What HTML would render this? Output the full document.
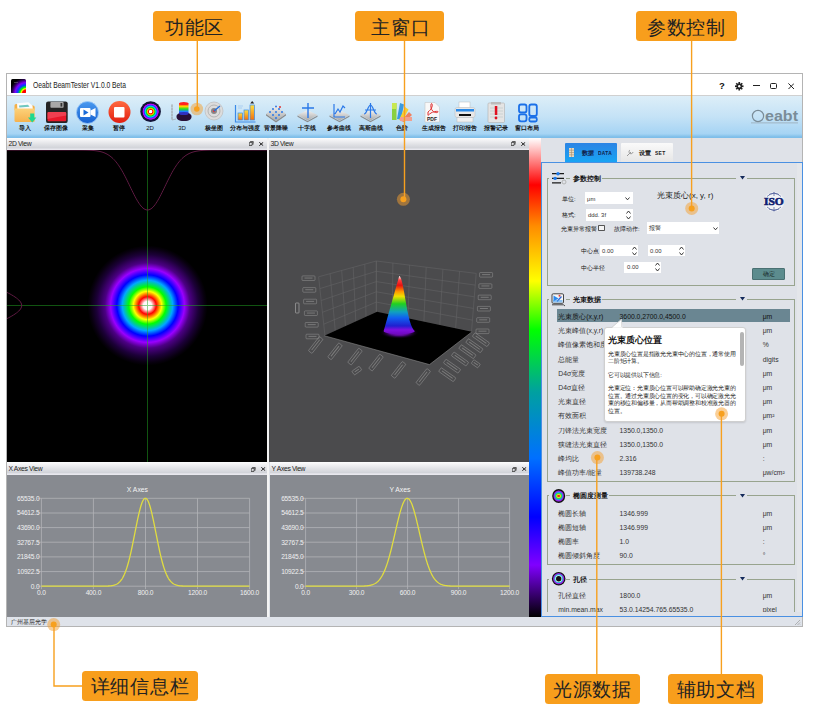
<!DOCTYPE html>
<html><head><meta charset="utf-8">
<style>
html,body{margin:0;padding:0;}
body{width:828px;height:727px;overflow:hidden;background:#fff;position:relative;font-family:"Liberation Sans",sans-serif;color:#222;}
.a{position:absolute;}
.win{left:6px;top:73px;width:797px;height:554px;border:1px solid #b4b4b4;box-sizing:border-box;background:#dfe2e8;}
.title{left:7px;top:74px;width:795px;height:21px;background:#fff;border-bottom:1px solid #d0d0d0;}
.tb{left:7px;top:96px;width:795px;height:42px;background:linear-gradient(#ddeef8,#c4e2f6 50%,#a6d4f4 90%,#82c0ea 97%,#7cbce8);}
.hdr{height:12px;background:linear-gradient(#fdfdfd 0%,#f2f2f4 20%,#dfe0e4 55%,#d0d2d8 85%,#e8e8ee 90%,#e8e8ee 100%);font-size:6.8px;line-height:12px;color:#222;}
.hdr span{position:absolute;left:1.5px;top:0;letter-spacing:-0.35px;}
.hdr i{position:absolute;font-style:normal;top:0;font-size:8px;}
.lbl{background:#f89e1c;border-radius:3.5px;color:#222;font-size:19px;text-align:center;line-height:33px;height:30px;box-sizing:border-box;overflow:hidden;letter-spacing:0.8px;}
.ol{background:#f59a1a;}
.t{white-space:nowrap;line-height:10px;}
.dot{width:13px;height:13px;border-radius:50%;background:rgba(245,160,40,0.45);}
.dot:after{content:"";position:absolute;left:3px;top:3px;width:7px;height:7px;border-radius:50%;background:#f7a01e;}
</style></head><body>

<!-- window -->
<div class="a win"></div>
<div class="a title"></div>
<div class="a tb"></div>


<!-- title bar content -->
<svg class="a" style="left:11px;top:78.5px;" width="15" height="14.5" viewBox="0 0 15 14.5">
<defs><radialGradient id="tg" cx="15" cy="14.5" r="16" gradientUnits="userSpaceOnUse"><stop offset="0" stop-color="#ff0000"/><stop offset="0.22" stop-color="#ff0000"/><stop offset="0.3" stop-color="#ffff00"/><stop offset="0.38" stop-color="#00ff00"/><stop offset="0.52" stop-color="#0040ff"/><stop offset="0.68" stop-color="#8000ff"/><stop offset="0.85" stop-color="#300060"/><stop offset="1" stop-color="#000000"/></radialGradient></defs>
<rect x="0" y="0" width="15" height="14.5" rx="1.5" fill="url(#tg)"/>
<path d="M3 3.5h4" stroke="#888" stroke-width="0.8" opacity="0.6"/>
</svg>
<div class="a" style="left:33px;top:80px;font-size:8.2px;line-height:12px;color:#222;white-space:nowrap;transform:scaleX(0.82);transform-origin:0 0;">Oeabt BeamTester V1.0.0 Beta</div>
<div class="a" style="left:719px;top:80px;font-size:9.5px;font-weight:bold;line-height:11px;color:#111;">?</div>
<svg class="a" style="left:735px;top:82px;" width="8.5" height="8.5" viewBox="0 0 10 10"><g fill="#222"><circle cx="5" cy="5" r="3.3"/><rect x="4" y="0" width="2" height="10"/><rect x="0" y="4" width="10" height="2"/><rect x="4" y="0" width="2" height="10" transform="rotate(45 5 5)"/><rect x="4" y="0" width="2" height="10" transform="rotate(-45 5 5)"/></g><circle cx="5" cy="5" r="1.4" fill="#fff"/></svg>
<div class="a" style="left:753px;top:85px;width:6.5px;height:1.3px;background:#222;"></div>
<div class="a" style="left:770px;top:82.5px;width:7px;height:6.5px;border:1.2px solid #222;border-radius:1.5px;box-sizing:border-box;"></div>
<svg class="a" style="left:787.5px;top:82.5px;" width="6.5" height="6.5" viewBox="0 0 6.5 6.5"><path d="M0.4 0.4L6.1 6.1M6.1 0.4L0.4 6.1" stroke="#222" stroke-width="1"/></svg>
<!-- toolbar icons -->
<svg class="a" style="left:7px;top:95px;" width="794" height="43" viewBox="7 95 794 43">
<defs>
<linearGradient id="fold" x1="0" y1="0" x2="0" y2="1"><stop offset="0" stop-color="#fcd27a"/><stop offset="1" stop-color="#f6b24e"/></linearGradient>
<linearGradient id="redc" x1="0" y1="0" x2="0" y2="1"><stop offset="0" stop-color="#ff6a40"/><stop offset="1" stop-color="#e21e10"/></linearGradient>
<linearGradient id="bluec" x1="0" y1="0" x2="0" y2="1"><stop offset="0" stop-color="#4a9af0"/><stop offset="1" stop-color="#1560d0"/></linearGradient>
<linearGradient id="rainbow" x1="0" y1="0" x2="0" y2="1"><stop offset="0" stop-color="#ff2020"/><stop offset="0.3" stop-color="#ffd000"/><stop offset="0.55" stop-color="#20e020"/><stop offset="0.8" stop-color="#2080ff"/><stop offset="1" stop-color="#3030c0"/></linearGradient>
<linearGradient id="plate" x1="0" y1="0" x2="0" y2="1"><stop offset="0" stop-color="#f4f4f4"/><stop offset="1" stop-color="#a8a8a8"/></linearGradient>
<linearGradient id="bar" x1="0" y1="0" x2="0" y2="1"><stop offset="0" stop-color="#ffe040"/><stop offset="1" stop-color="#f07010"/></linearGradient>
<radialGradient id="r2d"><stop offset="0" stop-color="#fff"/><stop offset="0.13" stop-color="#fff"/><stop offset="0.2" stop-color="#ff0000"/><stop offset="0.32" stop-color="#ffc000"/><stop offset="0.42" stop-color="#00e000"/><stop offset="0.52" stop-color="#00d0ff"/><stop offset="0.62" stop-color="#2040ff"/><stop offset="0.7" stop-color="#c000ff"/><stop offset="0.76" stop-color="#b000f0"/><stop offset="0.8" stop-color="#141440"/><stop offset="1" stop-color="#101030"/></radialGradient>
</defs>
<!-- 1 folder -->
<path d="M14.5 105.5q0-1.5 1.5-1.5h5l2 1.5h10q1.7 0 1.7 1.7v3h-20.2z" fill="#f4b048"/>
<path d="M17 103.2l11.5-1 4 3.5 0.6 5-15.5 1z" fill="#fbfbfb"/>
<path d="M19 105.5l9-0.7 1.5 2-10.2 0.8z" fill="#70c8c0"/>
<path d="M14.5 108.5h20.2v12q0 1.5-1.5 1.5h-17.2q-1.5 0-1.5-1.5z" fill="url(#fold)"/>
<path d="M30.2 113.4v4h-2.2l4.2 5.2 4.2-5.2h-2.2v-4z" fill="#1ed890"/>
<!-- 2 floppy -->
<rect x="46" y="101.4" width="21.7" height="21.7" rx="2.2" fill="#242424"/>
<rect x="50.4" y="102" width="13.2" height="5.8" rx="0.8" fill="#a8a8a8"/>
<rect x="60.5" y="103" width="1.8" height="3.6" fill="#333"/>
<rect x="47.5" y="111.9" width="18.7" height="9.3" rx="1.2" fill="#e8182a"/>
<path d="M47.5 113.1q0-1.2 1.2-1.2h16.3q1.2 0 1.2 1.2v2.5q-8 1-18.7 3.5z" fill="#f04a5a" opacity="0.8"/>
<!-- 3 capture -->
<circle cx="87.5" cy="112.5" r="11" fill="url(#bluec)"/>
<circle cx="87.5" cy="112.5" r="11" fill="none" stroke="#9cc8f8" stroke-width="0.8"/>
<rect x="80" y="108" width="10.5" height="9" rx="1" fill="#fff"/>
<path d="M90.5 110.5l5-2.5v9l-5-2.5z" fill="#fff"/>
<path d="M83.5 109.5v6l5-3z" fill="#1a6ad8"/>
<!-- 4 pause -->
<circle cx="119.5" cy="112" r="11" fill="url(#redc)"/>
<rect x="114" y="107" width="10.5" height="10.5" rx="1" fill="#fff"/>
<!-- 5 2D -->
<circle cx="150.6" cy="111.6" r="10.3" fill="url(#r2d)"/>
<!-- 6 3D -->
<g stroke="#999" stroke-width="0.6" fill="none"><path d="M172 104v16M171 106h2M171 109h2M171 112h2M171 115h2M171 118h2M172 120l4 -1"/></g>
<path d="M176.5 116.5c0-2.5 3-4 7.5-4s7.5 1.5 7.5 4-1.5 4.5-7.5 4.5-7.5-2-7.5-4.5z" fill="#281038"/>
<rect x="179" y="103.5" width="9.5" height="10" fill="url(#rainbow)"/>
<ellipse cx="183.75" cy="113.5" rx="4.75" ry="1.5" fill="#3030c0"/>
<ellipse cx="183.75" cy="103.5" rx="4.75" ry="1.6" fill="#ff2020"/>
<!-- 7 polar -->
<circle cx="214" cy="111" r="9" fill="#dcdcdc" stroke="#c0c0c0" stroke-width="0.8"/>
<circle cx="214" cy="111" r="6" fill="none" stroke="#aaa" stroke-width="0.8"/>
<circle cx="214" cy="111" r="3" fill="#888"/>
<circle cx="214" cy="111" r="1.2" fill="#e04040"/>
<path d="M214 111l6-5" stroke="#2070e0" stroke-width="1.3"/>
<!-- 8 distribution -->
<path d="M235.5 105v17h20" fill="none" stroke="#3a8ae8" stroke-width="1.2"/>
<rect x="238" y="113" width="4.5" height="7" fill="url(#bar)" stroke="#3a8ae8" stroke-width="0.7"/>
<rect x="244" y="110" width="4.5" height="10" fill="url(#bar)" stroke="#3a8ae8" stroke-width="0.7"/>
<rect x="250" y="105" width="4.5" height="15" fill="url(#bar)" stroke="#3a8ae8" stroke-width="0.7"/>
<path d="M252.2 101l-2 2.5h4z" fill="#222"/>
<g stroke="#9bc4ee" stroke-width="0.7"><path d="M238 106h5M238 108h4"/></g>
<!-- 9 bg denoise -->
<path d="M276 105l10 9-10 7-10-7z" fill="url(#plate)"/>
<path d="M266 114l10 7 10-7v1.5l-10 7-10-7z" fill="#8a8a8a"/>
<g fill="#2a78e8"><circle cx="276" cy="106.5" r="1"/><circle cx="273" cy="109" r="1"/><circle cx="279" cy="109" r="1"/><circle cx="270" cy="112" r="1"/><circle cx="276" cy="112" r="1"/><circle cx="282" cy="112" r="1"/><circle cx="273" cy="115" r="1"/><circle cx="279" cy="115" r="1"/><circle cx="276" cy="118" r="1"/></g>
<circle cx="280" cy="107" r="1" fill="#e03030"/>
<!-- 10 crosshair -->
<path d="M307.5 110l10 5-10 5.5-10-5.5z" fill="url(#plate)"/>
<path d="M297.5 115.5l10 5.5 10-5.5v1.3l-10 5.5-10-5.5z" fill="#8a8a8a"/>
<path d="M308 103v15M302 108h12" stroke="#2a78e8" stroke-width="1.4"/>
<!-- 11 reference curve -->
<path d="M339.5 110l10 5-10 5.5-10-5.5z" fill="url(#plate)"/>
<path d="M329.5 115.5l10 5.5 10-5.5v1.3l-10 5.5-10-5.5z" fill="#8a8a8a"/>
<path d="M334 104v13h11M335 114l3-5 2 3 3-6 2 2" fill="none" stroke="#2a78e8" stroke-width="1.2"/>
<!-- 12 gaussian -->
<path d="M370.5 110l10 5-10 5.5-10-5.5z" fill="url(#plate)"/>
<path d="M360.5 115.5l10 5.5 10-5.5v1.3l-10 5.5-10-5.5z" fill="#8a8a8a"/>
<path d="M364 114c3 0 4-9 6.5-9s3.5 9 6.5 9M370.5 103v15M365 110h11" fill="none" stroke="#2a78e8" stroke-width="1.2"/>
<!-- 13 color scale -->
<rect x="392" y="103" width="4.5" height="17" fill="#8ad040"/>
<rect x="392" y="103" width="4.5" height="6" fill="#c8e850"/>
<path d="M397 119l3-16 4 1.5-3 15z" fill="#3a9ae0"/>
<path d="M399 120l6-13 3.5 2.5-6 11z" fill="#f8d030"/>
<path d="M401 121l8-9 3 3-8 7z" fill="#f08060"/>
<rect x="400" y="117" width="12" height="4" fill="#f0a090"/>
<!-- 14 pdf -->
<path d="M425 102.5h10l4.5 4.5v15h-14.5z" fill="#f8f8f8" stroke="#c8c8c8" stroke-width="0.6"/>
<path d="M428 112c3-2 5-6 4-8s-2 3 0 6 5 3 6 2-4-1-7 1-3 3-3 2z" fill="none" stroke="#e03030" stroke-width="1"/>
<text x="427" y="121" font-size="5" font-weight="bold" fill="#222" font-family="Liberation Sans">PDF</text>
<!-- 15 printer -->
<rect x="459" y="102" width="11" height="6" fill="#fff" stroke="#bbb" stroke-width="0.5"/>
<rect x="455" y="107.5" width="20" height="10" rx="2" fill="#e8e8e8" stroke="#bbb" stroke-width="0.5"/>
<rect x="456" y="109" width="18" height="2.5" fill="#2a8ae8"/>
<rect x="459" y="114" width="12" height="2" fill="#111"/>
<rect x="457" y="117.5" width="16" height="4.5" fill="#f0f0f0" stroke="#bbb" stroke-width="0.5"/>
<!-- 16 alarm record -->
<rect x="488" y="103" width="16.5" height="19.5" rx="1" fill="#e4e4e4" stroke="#b0b0b0" stroke-width="0.6"/>
<rect x="491" y="102" width="10" height="2.5" fill="#bbb"/>
<g stroke="#b8c8c8" stroke-width="0.6"><path d="M490 108h13M490 111h13M490 114h13M490 117h13"/></g>
<rect x="494.8" y="106" width="2.5" height="9" fill="#e01020"/>
<circle cx="496" cy="118" r="1.4" fill="#e01020"/>
<!-- 17 layout -->
<g fill="none" stroke="#1a70e8" stroke-width="1.8">
<rect x="519" y="104.5" width="7.5" height="8" rx="2"/>
<rect x="519" y="114.3" width="7.5" height="7" rx="2"/>
<rect x="529.3" y="104.5" width="7.5" height="11.5" rx="2"/>
<rect x="529.3" y="117.5" width="7.5" height="4" rx="1.5"/>
</g>
<!-- logo -->
<circle cx="758" cy="116" r="5.6" fill="none" stroke="#7a8c98" stroke-width="1.2"/>
<text x="765" y="120.5" font-size="14" font-weight="bold" fill="#7a8c98" font-family="Liberation Sans" textLength="33" lengthAdjust="spacingAndGlyphs">eabt</text>
<rect x="751" y="122.5" width="47" height="0.8" fill="#98aab6"/>
</svg>
<div class="a" style="left:7px;top:124px;width:794px;height:9px;font-size:6px;line-height:9px;color:#111;font-weight:bold;">
<span class="a" style="left:-2px;width:40px;text-align:center;">导入</span>
<span class="a" style="left:29px;width:40px;text-align:center;">保存图像</span>
<span class="a" style="left:61px;width:40px;text-align:center;">采集</span>
<span class="a" style="left:92px;width:40px;text-align:center;">暂停</span>
<span class="a" style="left:123px;width:40px;text-align:center;font-weight:normal;">2D</span>
<span class="a" style="left:155px;width:40px;text-align:center;font-weight:normal;">3D</span>
<span class="a" style="left:187px;width:40px;text-align:center;">极坐图</span>
<span class="a" style="left:218px;width:40px;text-align:center;">分布与强度</span>
<span class="a" style="left:249px;width:40px;text-align:center;">背景降噪</span>
<span class="a" style="left:280px;width:40px;text-align:center;">十字线</span>
<span class="a" style="left:312px;width:40px;text-align:center;">参考曲线</span>
<span class="a" style="left:344px;width:40px;text-align:center;">高斯曲线</span>
<span class="a" style="left:375px;width:40px;text-align:center;">色阶</span>
<span class="a" style="left:407px;width:40px;text-align:center;">生成报告</span>
<span class="a" style="left:438px;width:40px;text-align:center;">打印报告</span>
<span class="a" style="left:469px;width:40px;text-align:center;">报警记录</span>
<span class="a" style="left:500px;width:40px;text-align:center;">窗口布局</span>
</div>

<!-- docks -->
<div class="a hdr" style="left:7px;top:138px;width:260px;"><span>2D View</span></div>
<svg class="a" style="left:7px;top:150px;" width="260" height="312" viewBox="7 150 260 312">
<defs><radialGradient id="beam" cx="147.5" cy="305.5" r="60" gradientUnits="userSpaceOnUse">
<stop offset="0" stop-color="#ffffff"/><stop offset="0.07" stop-color="#fff6f6"/><stop offset="0.145" stop-color="#ff0000"/><stop offset="0.19" stop-color="#ff8000"/><stop offset="0.235" stop-color="#ffff00"/><stop offset="0.31" stop-color="#00ff00"/><stop offset="0.42" stop-color="#00a8ff"/><stop offset="0.51" stop-color="#0000ff"/><stop offset="0.615" stop-color="#9a00ff"/><stop offset="0.71" stop-color="#4c0084"/><stop offset="0.85" stop-color="#1c0038"/><stop offset="0.95" stop-color="#08000f"/><stop offset="1" stop-color="#000000"/></radialGradient></defs>
<rect x="7" y="150" width="260" height="312" fill="#000"/>
<circle cx="147.5" cy="305.5" r="60" fill="url(#beam)"/>
<path d="M147.5 150V462M7 305.5H267" stroke="#22a822" stroke-width="1" opacity="0.5"/>
<path d="M7.0,150.00 L8.0,150.00 L9.0,150.00 L10.0,150.00 L11.0,150.00 L12.0,150.00 L13.0,150.00 L14.0,150.00 L15.0,150.00 L16.0,150.00 L17.0,150.00 L18.0,150.00 L19.0,150.00 L20.0,150.00 L21.0,150.00 L22.0,150.00 L23.0,150.00 L24.0,150.00 L25.0,150.00 L26.0,150.00 L27.0,150.00 L28.0,150.00 L29.0,150.00 L30.0,150.00 L31.0,150.00 L32.0,150.00 L33.0,150.00 L34.0,150.00 L35.0,150.00 L36.0,150.00 L37.0,150.00 L38.0,150.00 L39.0,150.00 L40.0,150.00 L41.0,150.00 L42.0,150.00 L43.0,150.00 L44.0,150.00 L45.0,150.00 L46.0,150.00 L47.0,150.00 L48.0,150.00 L49.0,150.00 L50.0,150.00 L51.0,150.00 L52.0,150.00 L53.0,150.00 L54.0,150.00 L55.0,150.00 L56.0,150.00 L57.0,150.00 L58.0,150.00 L59.0,150.00 L60.0,150.00 L61.0,150.00 L62.0,150.00 L63.0,150.00 L64.0,150.00 L65.0,150.00 L66.0,150.00 L67.0,150.00 L68.0,150.00 L69.0,150.00 L70.0,150.00 L71.0,150.00 L72.0,150.01 L73.0,150.01 L74.0,150.01 L75.0,150.01 L76.0,150.01 L77.0,150.02 L78.0,150.02 L79.0,150.03 L80.0,150.04 L81.0,150.04 L82.0,150.05 L83.0,150.07 L84.0,150.08 L85.0,150.10 L86.0,150.12 L87.0,150.15 L88.0,150.19 L89.0,150.22 L90.0,150.27 L91.0,150.33 L92.0,150.39 L93.0,150.47 L94.0,150.56 L95.0,150.67 L96.0,150.79 L97.0,150.93 L98.0,151.10 L99.0,151.29 L100.0,151.51 L101.0,151.76 L102.0,152.04 L103.0,152.37 L104.0,152.73 L105.0,153.14 L106.0,153.61 L107.0,154.12 L108.0,154.70 L109.0,155.34 L110.0,156.04 L111.0,156.82 L112.0,157.67 L113.0,158.59 L114.0,159.60 L115.0,160.70 L116.0,161.87 L117.0,163.14 L118.0,164.49 L119.0,165.93 L120.0,167.46 L121.0,169.06 L122.0,170.75 L123.0,172.52 L124.0,174.35 L125.0,176.25 L126.0,178.21 L127.0,180.21 L128.0,182.25 L129.0,184.31 L130.0,186.39 L131.0,188.47 L132.0,190.53 L133.0,192.57 L134.0,194.56 L135.0,196.49 L136.0,198.35 L137.0,200.12 L138.0,201.78 L139.0,203.32 L140.0,204.74 L141.0,206.00 L142.0,207.11 L143.0,208.05 L144.0,208.81 L145.0,209.39 L146.0,209.78 L147.0,209.98 L148.0,209.98 L149.0,209.78 L150.0,209.39 L151.0,208.81 L152.0,208.05 L153.0,207.11 L154.0,206.00 L155.0,204.74 L156.0,203.32 L157.0,201.78 L158.0,200.12 L159.0,198.35 L160.0,196.49 L161.0,194.56 L162.0,192.57 L163.0,190.53 L164.0,188.47 L165.0,186.39 L166.0,184.31 L167.0,182.25 L168.0,180.21 L169.0,178.21 L170.0,176.25 L171.0,174.35 L172.0,172.52 L173.0,170.75 L174.0,169.06 L175.0,167.46 L176.0,165.93 L177.0,164.49 L178.0,163.14 L179.0,161.87 L180.0,160.70 L181.0,159.60 L182.0,158.59 L183.0,157.67 L184.0,156.82 L185.0,156.04 L186.0,155.34 L187.0,154.70 L188.0,154.12 L189.0,153.61 L190.0,153.14 L191.0,152.73 L192.0,152.37 L193.0,152.04 L194.0,151.76 L195.0,151.51 L196.0,151.29 L197.0,151.10 L198.0,150.93 L199.0,150.79 L200.0,150.67 L201.0,150.56 L202.0,150.47 L203.0,150.39 L204.0,150.33 L205.0,150.27 L206.0,150.22 L207.0,150.19 L208.0,150.15 L209.0,150.12 L210.0,150.10 L211.0,150.08 L212.0,150.07 L213.0,150.05 L214.0,150.04 L215.0,150.04 L216.0,150.03 L217.0,150.02 L218.0,150.02 L219.0,150.01 L220.0,150.01 L221.0,150.01 L222.0,150.01 L223.0,150.01 L224.0,150.00 L225.0,150.00 L226.0,150.00 L227.0,150.00 L228.0,150.00 L229.0,150.00 L230.0,150.00 L231.0,150.00 L232.0,150.00 L233.0,150.00 L234.0,150.00 L235.0,150.00 L236.0,150.00 L237.0,150.00 L238.0,150.00 L239.0,150.00 L240.0,150.00 L241.0,150.00 L242.0,150.00 L243.0,150.00 L244.0,150.00 L245.0,150.00 L246.0,150.00 L247.0,150.00 L248.0,150.00 L249.0,150.00 L250.0,150.00 L251.0,150.00 L252.0,150.00 L253.0,150.00 L254.0,150.00 L255.0,150.00 L256.0,150.00 L257.0,150.00 L258.0,150.00 L259.0,150.00 L260.0,150.00 L261.0,150.00 L262.0,150.00 L263.0,150.00 L264.0,150.00 L265.0,150.00 L266.0,150.00 L267.0,150.00" fill="none" stroke="#5e1a42" stroke-width="1"/>
<path d="M-38.30,150.0 L-38.30,151.0 L-38.30,152.0 L-38.30,153.0 L-38.30,154.0 L-38.30,155.0 L-38.30,156.0 L-38.30,157.0 L-38.30,158.0 L-38.30,159.0 L-38.30,160.0 L-38.30,161.0 L-38.30,162.0 L-38.30,163.0 L-38.30,164.0 L-38.30,165.0 L-38.30,166.0 L-38.30,167.0 L-38.30,168.0 L-38.30,169.0 L-38.30,170.0 L-38.30,171.0 L-38.30,172.0 L-38.30,173.0 L-38.30,174.0 L-38.30,175.0 L-38.30,176.0 L-38.30,177.0 L-38.30,178.0 L-38.30,179.0 L-38.30,180.0 L-38.30,181.0 L-38.30,182.0 L-38.30,183.0 L-38.30,184.0 L-38.30,185.0 L-38.30,186.0 L-38.30,187.0 L-38.30,188.0 L-38.30,189.0 L-38.30,190.0 L-38.30,191.0 L-38.30,192.0 L-38.30,193.0 L-38.30,194.0 L-38.30,195.0 L-38.30,196.0 L-38.30,197.0 L-38.30,198.0 L-38.30,199.0 L-38.30,200.0 L-38.30,201.0 L-38.30,202.0 L-38.30,203.0 L-38.30,204.0 L-38.30,205.0 L-38.30,206.0 L-38.30,207.0 L-38.30,208.0 L-38.30,209.0 L-38.30,210.0 L-38.30,211.0 L-38.30,212.0 L-38.30,213.0 L-38.30,214.0 L-38.30,215.0 L-38.30,216.0 L-38.30,217.0 L-38.30,218.0 L-38.30,219.0 L-38.30,220.0 L-38.30,221.0 L-38.30,222.0 L-38.30,223.0 L-38.30,224.0 L-38.30,225.0 L-38.30,226.0 L-38.30,227.0 L-38.30,228.0 L-38.30,229.0 L-38.29,230.0 L-38.29,231.0 L-38.29,232.0 L-38.29,233.0 L-38.29,234.0 L-38.28,235.0 L-38.28,236.0 L-38.27,237.0 L-38.26,238.0 L-38.26,239.0 L-38.25,240.0 L-38.23,241.0 L-38.22,242.0 L-38.20,243.0 L-38.18,244.0 L-38.15,245.0 L-38.11,246.0 L-38.08,247.0 L-38.03,248.0 L-37.97,249.0 L-37.91,250.0 L-37.83,251.0 L-37.74,252.0 L-37.63,253.0 L-37.51,254.0 L-37.37,255.0 L-37.20,256.0 L-37.01,257.0 L-36.79,258.0 L-36.54,259.0 L-36.26,260.0 L-35.93,261.0 L-35.57,262.0 L-35.16,263.0 L-34.69,264.0 L-34.18,265.0 L-33.60,266.0 L-32.96,267.0 L-32.26,268.0 L-31.48,269.0 L-30.63,270.0 L-29.71,271.0 L-28.70,272.0 L-27.60,273.0 L-26.43,274.0 L-25.16,275.0 L-23.81,276.0 L-22.37,277.0 L-20.84,278.0 L-19.24,279.0 L-17.55,280.0 L-15.78,281.0 L-13.95,282.0 L-12.05,283.0 L-10.09,284.0 L-8.09,285.0 L-6.05,286.0 L-3.99,287.0 L-1.91,288.0 L0.17,289.0 L2.23,290.0 L4.27,291.0 L6.26,292.0 L8.19,293.0 L10.05,294.0 L11.82,295.0 L13.48,296.0 L15.02,297.0 L16.44,298.0 L17.70,299.0 L18.81,300.0 L19.75,301.0 L20.51,302.0 L21.09,303.0 L21.48,304.0 L21.68,305.0 L21.68,306.0 L21.48,307.0 L21.09,308.0 L20.51,309.0 L19.75,310.0 L18.81,311.0 L17.70,312.0 L16.44,313.0 L15.02,314.0 L13.48,315.0 L11.82,316.0 L10.05,317.0 L8.19,318.0 L6.26,319.0 L4.27,320.0 L2.23,321.0 L0.17,322.0 L-1.91,323.0 L-3.99,324.0 L-6.05,325.0 L-8.09,326.0 L-10.09,327.0 L-12.05,328.0 L-13.95,329.0 L-15.78,330.0 L-17.55,331.0 L-19.24,332.0 L-20.84,333.0 L-22.37,334.0 L-23.81,335.0 L-25.16,336.0 L-26.43,337.0 L-27.60,338.0 L-28.70,339.0 L-29.71,340.0 L-30.63,341.0 L-31.48,342.0 L-32.26,343.0 L-32.96,344.0 L-33.60,345.0 L-34.18,346.0 L-34.69,347.0 L-35.16,348.0 L-35.57,349.0 L-35.93,350.0 L-36.26,351.0 L-36.54,352.0 L-36.79,353.0 L-37.01,354.0 L-37.20,355.0 L-37.37,356.0 L-37.51,357.0 L-37.63,358.0 L-37.74,359.0 L-37.83,360.0 L-37.91,361.0 L-37.97,362.0 L-38.03,363.0 L-38.08,364.0 L-38.11,365.0 L-38.15,366.0 L-38.18,367.0 L-38.20,368.0 L-38.22,369.0 L-38.23,370.0 L-38.25,371.0 L-38.26,372.0 L-38.26,373.0 L-38.27,374.0 L-38.28,375.0 L-38.28,376.0 L-38.29,377.0 L-38.29,378.0 L-38.29,379.0 L-38.29,380.0 L-38.29,381.0 L-38.30,382.0 L-38.30,383.0 L-38.30,384.0 L-38.30,385.0 L-38.30,386.0 L-38.30,387.0 L-38.30,388.0 L-38.30,389.0 L-38.30,390.0 L-38.30,391.0 L-38.30,392.0 L-38.30,393.0 L-38.30,394.0 L-38.30,395.0 L-38.30,396.0 L-38.30,397.0 L-38.30,398.0 L-38.30,399.0 L-38.30,400.0 L-38.30,401.0 L-38.30,402.0 L-38.30,403.0 L-38.30,404.0 L-38.30,405.0 L-38.30,406.0 L-38.30,407.0 L-38.30,408.0 L-38.30,409.0 L-38.30,410.0 L-38.30,411.0 L-38.30,412.0 L-38.30,413.0 L-38.30,414.0 L-38.30,415.0 L-38.30,416.0 L-38.30,417.0 L-38.30,418.0 L-38.30,419.0 L-38.30,420.0 L-38.30,421.0 L-38.30,422.0 L-38.30,423.0 L-38.30,424.0 L-38.30,425.0 L-38.30,426.0 L-38.30,427.0 L-38.30,428.0 L-38.30,429.0 L-38.30,430.0 L-38.30,431.0 L-38.30,432.0 L-38.30,433.0 L-38.30,434.0 L-38.30,435.0 L-38.30,436.0 L-38.30,437.0 L-38.30,438.0 L-38.30,439.0 L-38.30,440.0 L-38.30,441.0 L-38.30,442.0 L-38.30,443.0 L-38.30,444.0 L-38.30,445.0 L-38.30,446.0 L-38.30,447.0 L-38.30,448.0 L-38.30,449.0 L-38.30,450.0 L-38.30,451.0 L-38.30,452.0 L-38.30,453.0 L-38.30,454.0 L-38.30,455.0 L-38.30,456.0 L-38.30,457.0 L-38.30,458.0 L-38.30,459.0 L-38.30,460.0 L-38.30,461.0" fill="none" stroke="#5e1a42" stroke-width="1"/>
</svg>
<div class="a" style="left:267px;top:138px;width:2px;height:479px;background:#f4f4f4;"></div>
<div class="a hdr" style="left:269px;top:138px;width:260px;"><span>3D View</span></div>
<svg class="a" style="left:269px;top:150px;" width="260" height="312" viewBox="269 150 260 312">
<defs>
<linearGradient id="pk" x1="0" y1="276" x2="0" y2="334" gradientUnits="userSpaceOnUse">
<stop offset="0" stop-color="#ffffff"/><stop offset="0.07" stop-color="#ff4040"/><stop offset="0.16" stop-color="#e81010"/><stop offset="0.27" stop-color="#ff9a00"/><stop offset="0.35" stop-color="#f0e000"/><stop offset="0.48" stop-color="#20d020"/><stop offset="0.62" stop-color="#10a0c0"/><stop offset="0.72" stop-color="#1060f0"/><stop offset="0.86" stop-color="#2020d0"/><stop offset="0.93" stop-color="#8010e0"/><stop offset="1" stop-color="#7008c0"/></linearGradient>
<radialGradient id="glow" cx="0.5" cy="0.5" r="0.5"><stop offset="0" stop-color="#9a18f0"/><stop offset="0.5" stop-color="#6a08b0" stop-opacity="0.8"/><stop offset="1" stop-color="#000" stop-opacity="0"/></radialGradient>
</defs>
<rect x="269" y="150" width="260" height="312" fill="#4b4b4d"/>
<path d="M318.6 276.8L376.3 261.0M376.3 261.0L476.2 273.4M319.9 288.6L376.3 271.3M376.3 271.3L475.3 285.1M321.2 300.5L376.3 281.6M376.3 281.6L474.3 296.8M322.4 312.3L376.3 291.8M376.3 291.8L473.4 308.4M323.7 324.2L376.3 302.1M376.3 302.1L472.4 320.1M325.0 336.0L376.3 312.4M376.3 312.4L471.5 331.8M318.6 276.8L325.0 336.0M330.1 273.6L335.3 331.3M341.7 270.5L345.5 326.6M353.2 267.3L355.8 321.8M364.8 264.2L366.0 317.1M376.3 261.0L376.3 312.4M376.3 261.0L376.3 312.4M392.9 263.1L392.2 315.6M409.6 265.1L408.0 318.9M426.2 267.2L423.9 322.1M442.9 269.3L439.8 325.3M459.6 271.3L455.6 328.6M476.2 273.4L471.5 331.8" stroke="#656567" stroke-width="0.55" fill="none"/>
<path d="M324.2 335.7L377 311.8L472.1 331.7L429.5 364.6Z" fill="#000"/>
<path d="M324.2 335.7L429.5 364.6L472.1 331.7" fill="none" stroke="#888" stroke-width="0.6"/>
<ellipse cx="399.2" cy="332.5" rx="20" ry="6.5" fill="url(#glow)"/>
<path d="M399.20 276.00 L399.80 276.29 L400.41 277.14 L401.12 278.85 L401.95 281.70 L402.62 284.55 L403.21 287.40 L404.27 293.10 L405.26 298.80 L406.26 304.50 L407.32 310.20 L408.51 315.90 L409.64 320.46 L410.89 324.45 L412.08 327.30 L413.04 329.01 L413.89 330.15 L414.74 331.00 A15.54 3.2 0 0 1 383.66 331.00 383.66 331.00 L384.51 330.15 L385.36 329.01 L386.32 327.30 L387.51 324.45 L388.76 320.46 L389.89 315.90 L391.08 310.20 L392.14 304.50 L393.14 298.80 L394.13 293.10 L395.19 287.40 L395.78 284.55 L396.45 281.70 L397.28 278.85 L397.99 277.14 L398.60 276.29 L399.20 276.00 Z" fill="url(#pk)"/>
<rect x="302.0" y="275.9" width="13" height="4.6" rx="0.8" fill="none" stroke="#a8a8a8" stroke-width="0.4"/><rect x="304.5" y="277.6" width="8" height="0.9" fill="#7e7e7e"/><rect x="302.8" y="287.6" width="13" height="4.6" rx="0.8" fill="none" stroke="#a8a8a8" stroke-width="0.4"/><rect x="305.3" y="289.3" width="8" height="0.9" fill="#7e7e7e"/><rect x="303.6" y="299.2" width="13" height="4.6" rx="0.8" fill="none" stroke="#a8a8a8" stroke-width="0.4"/><rect x="306.1" y="300.9" width="8" height="0.9" fill="#7e7e7e"/><rect x="304.4" y="310.9" width="13" height="4.6" rx="0.8" fill="none" stroke="#a8a8a8" stroke-width="0.4"/><rect x="306.9" y="312.6" width="8" height="0.9" fill="#7e7e7e"/><rect x="305.2" y="322.5" width="13" height="4.6" rx="0.8" fill="none" stroke="#a8a8a8" stroke-width="0.4"/><rect x="307.7" y="324.2" width="8" height="0.9" fill="#7e7e7e"/><rect x="306.0" y="334.2" width="13" height="4.6" rx="0.8" fill="none" stroke="#a8a8a8" stroke-width="0.4"/><rect x="308.5" y="335.9" width="8" height="0.9" fill="#7e7e7e"/><rect x="479.6" y="272.5" width="13" height="4.6" rx="0.8" fill="none" stroke="#a8a8a8" stroke-width="0.4"/><rect x="482.1" y="274.2" width="8" height="0.9" fill="#7e7e7e"/><rect x="478.9" y="283.8" width="13" height="4.6" rx="0.8" fill="none" stroke="#a8a8a8" stroke-width="0.4"/><rect x="481.4" y="285.5" width="8" height="0.9" fill="#7e7e7e"/><rect x="478.2" y="295.1" width="13" height="4.6" rx="0.8" fill="none" stroke="#a8a8a8" stroke-width="0.4"/><rect x="480.7" y="296.8" width="8" height="0.9" fill="#7e7e7e"/><rect x="477.4" y="306.4" width="13" height="4.6" rx="0.8" fill="none" stroke="#a8a8a8" stroke-width="0.4"/><rect x="479.9" y="308.1" width="8" height="0.9" fill="#7e7e7e"/><rect x="476.7" y="317.7" width="13" height="4.6" rx="0.8" fill="none" stroke="#a8a8a8" stroke-width="0.4"/><rect x="479.2" y="319.4" width="8" height="0.9" fill="#7e7e7e"/><rect x="476.0" y="329.0" width="13" height="4.6" rx="0.8" fill="none" stroke="#a8a8a8" stroke-width="0.4"/><rect x="478.5" y="330.7" width="8" height="0.9" fill="#7e7e7e"/><g transform="translate(315.7 345) rotate(-52)"><rect x="-9" y="-2.3" width="18" height="4.6" rx="0.8" fill="none" stroke="#a8a8a8" stroke-width="0.4"/><rect x="-6.5" y="-0.5" width="13" height="0.9" fill="#7e7e7e"/></g><g transform="translate(335 351.3) rotate(-52)"><rect x="-9" y="-2.3" width="18" height="4.6" rx="0.8" fill="none" stroke="#a8a8a8" stroke-width="0.4"/><rect x="-6.5" y="-0.5" width="13" height="0.9" fill="#7e7e7e"/></g><g transform="translate(355 356.6) rotate(-52)"><rect x="-9" y="-2.3" width="18" height="4.6" rx="0.8" fill="none" stroke="#a8a8a8" stroke-width="0.4"/><rect x="-6.5" y="-0.5" width="13" height="0.9" fill="#7e7e7e"/></g><g transform="translate(376 362.6) rotate(-52)"><rect x="-9" y="-2.3" width="18" height="4.6" rx="0.8" fill="none" stroke="#a8a8a8" stroke-width="0.4"/><rect x="-6.5" y="-0.5" width="13" height="0.9" fill="#7e7e7e"/></g><g transform="translate(398.6 369.9) rotate(-52)"><rect x="-9" y="-2.3" width="18" height="4.6" rx="0.8" fill="none" stroke="#a8a8a8" stroke-width="0.4"/><rect x="-6.5" y="-0.5" width="13" height="0.9" fill="#7e7e7e"/></g><g transform="translate(423.2 377) rotate(-52)"><rect x="-9" y="-2.3" width="18" height="4.6" rx="0.8" fill="none" stroke="#a8a8a8" stroke-width="0.4"/><rect x="-6.5" y="-0.5" width="13" height="0.9" fill="#7e7e7e"/></g><g transform="translate(356.8 370.6) rotate(-35)"><rect x="-4.5" y="-2.3" width="9" height="4.6" rx="0.8" fill="none" stroke="#a8a8a8" stroke-width="0.4"/><rect x="-2.5" y="-0.5" width="5" height="0.9" fill="#7e7e7e"/></g><g transform="translate(447.3 374.7) rotate(35)"><rect x="-9" y="-2.3" width="18" height="4.6" rx="0.8" fill="none" stroke="#a8a8a8" stroke-width="0.4"/><rect x="-6.5" y="-0.5" width="13" height="0.9" fill="#7e7e7e"/></g><g transform="translate(452 366.2) rotate(35)"><rect x="-9" y="-2.3" width="18" height="4.6" rx="0.8" fill="none" stroke="#a8a8a8" stroke-width="0.4"/><rect x="-6.5" y="-0.5" width="13" height="0.9" fill="#7e7e7e"/></g><g transform="translate(460 359) rotate(35)"><rect x="-9" y="-2.3" width="18" height="4.6" rx="0.8" fill="none" stroke="#a8a8a8" stroke-width="0.4"/><rect x="-6.5" y="-0.5" width="13" height="0.9" fill="#7e7e7e"/></g><g transform="translate(467.4 351.7) rotate(35)"><rect x="-9" y="-2.3" width="18" height="4.6" rx="0.8" fill="none" stroke="#a8a8a8" stroke-width="0.4"/><rect x="-6.5" y="-0.5" width="13" height="0.9" fill="#7e7e7e"/></g><g transform="translate(474.4 345.7) rotate(35)"><rect x="-9" y="-2.3" width="18" height="4.6" rx="0.8" fill="none" stroke="#a8a8a8" stroke-width="0.4"/><rect x="-6.5" y="-0.5" width="13" height="0.9" fill="#7e7e7e"/></g><g transform="translate(481 339.7) rotate(35)"><rect x="-9" y="-2.3" width="18" height="4.6" rx="0.8" fill="none" stroke="#a8a8a8" stroke-width="0.4"/><rect x="-6.5" y="-0.5" width="13" height="0.9" fill="#7e7e7e"/></g><g transform="translate(475.8 363.8) rotate(35)"><rect x="-4" y="-2.3" width="8" height="4.6" rx="0.8" fill="none" stroke="#a8a8a8" stroke-width="0.4"/><rect x="-2.5" y="-0.5" width="5" height="0.9" fill="#7e7e7e"/></g><rect x="295.5" y="303" width="3.5" height="10" rx="0.6" fill="none" stroke="#c8c8c8" stroke-width="0.5"/>
</svg>

<div class="a hdr" style="left:7px;top:462px;width:260px;height:13px;line-height:13px;"><span>X Axes View</span></div>
<svg class="a" style="left:7px;top:475px;" width="260" height="142" viewBox="7 475 260 142">
<rect x="7" y="475" width="260" height="142" fill="#878a90"/>
<path d="M37.4 498.3H249.6M37.4 513.0H249.6M37.4 527.6H249.6M37.4 542.2H249.6M37.4 556.9H249.6M37.4 571.6H249.6M37.4 586.2H249.6M41.4 498.3V589.2M93.4 498.3V589.2M145.5 498.3V589.2M197.5 498.3V589.2M249.6 498.3V589.2" stroke="#b2b4b8" stroke-width="0.8" fill="none"/><path d="M41.4,586.20 L41.9,586.20 L42.4,586.20 L42.9,586.20 L43.4,586.20 L43.9,586.20 L44.4,586.20 L44.9,586.20 L45.4,586.20 L45.9,586.20 L46.4,586.20 L46.9,586.20 L47.4,586.20 L47.9,586.20 L48.4,586.20 L48.9,586.20 L49.4,586.20 L49.9,586.20 L50.4,586.20 L50.9,586.20 L51.4,586.20 L51.9,586.20 L52.4,586.20 L52.9,586.20 L53.4,586.20 L53.9,586.20 L54.4,586.20 L54.9,586.20 L55.4,586.20 L55.9,586.20 L56.4,586.20 L56.9,586.20 L57.4,586.20 L57.9,586.20 L58.4,586.20 L58.9,586.20 L59.4,586.20 L59.9,586.20 L60.4,586.20 L60.9,586.20 L61.4,586.20 L61.9,586.20 L62.4,586.20 L62.9,586.20 L63.4,586.20 L63.9,586.20 L64.4,586.20 L64.9,586.20 L65.4,586.20 L65.9,586.20 L66.4,586.20 L66.9,586.20 L67.4,586.20 L67.9,586.20 L68.4,586.20 L68.9,586.20 L69.4,586.20 L69.9,586.20 L70.4,586.20 L70.9,586.20 L71.4,586.20 L71.9,586.20 L72.4,586.20 L72.9,586.20 L73.4,586.20 L73.9,586.20 L74.4,586.20 L74.9,586.20 L75.4,586.20 L75.9,586.20 L76.4,586.20 L76.9,586.20 L77.4,586.20 L77.9,586.20 L78.4,586.20 L78.9,586.20 L79.4,586.20 L79.9,586.20 L80.4,586.20 L80.9,586.20 L81.4,586.20 L81.9,586.20 L82.4,586.20 L82.9,586.20 L83.4,586.20 L83.9,586.20 L84.4,586.20 L84.9,586.20 L85.4,586.20 L85.9,586.20 L86.4,586.20 L86.9,586.20 L87.4,586.20 L87.9,586.20 L88.4,586.20 L88.9,586.20 L89.4,586.20 L89.9,586.20 L90.4,586.20 L90.9,586.20 L91.4,586.20 L91.9,586.20 L92.4,586.20 L92.9,586.20 L93.4,586.20 L93.9,586.20 L94.4,586.20 L94.9,586.20 L95.4,586.20 L95.9,586.20 L96.4,586.20 L96.9,586.20 L97.4,586.20 L97.9,586.20 L98.4,586.20 L98.9,586.20 L99.4,586.19 L99.9,586.19 L100.4,586.19 L100.9,586.19 L101.4,586.19 L101.9,586.18 L102.4,586.18 L102.9,586.18 L103.4,586.17 L103.9,586.16 L104.4,586.16 L104.9,586.15 L105.4,586.14 L105.9,586.13 L106.4,586.11 L106.9,586.09 L107.4,586.07 L107.9,586.05 L108.4,586.02 L108.9,585.99 L109.4,585.95 L109.9,585.91 L110.4,585.86 L110.9,585.80 L111.4,585.74 L111.9,585.66 L112.4,585.57 L112.9,585.47 L113.4,585.35 L113.9,585.22 L114.4,585.07 L114.9,584.91 L115.4,584.72 L115.9,584.50 L116.4,584.26 L116.9,583.99 L117.4,583.69 L117.9,583.35 L118.4,582.98 L118.9,582.56 L119.4,582.10 L119.9,581.59 L120.4,581.04 L120.9,580.42 L121.4,579.75 L121.9,579.02 L122.4,578.22 L122.9,577.35 L123.4,576.41 L123.9,575.40 L124.4,574.30 L124.9,573.13 L125.4,571.87 L125.9,570.53 L126.4,569.10 L126.9,567.58 L127.4,565.98 L127.9,564.28 L128.4,562.50 L128.9,560.63 L129.4,558.67 L129.9,556.63 L130.4,554.52 L130.9,552.32 L131.4,550.06 L131.9,547.74 L132.4,545.36 L132.9,542.92 L133.4,540.45 L133.9,537.95 L134.4,535.42 L134.9,532.89 L135.4,530.35 L135.9,527.82 L136.4,525.32 L136.9,522.86 L137.4,520.44 L137.9,518.09 L138.4,515.82 L138.9,513.63 L139.4,511.54 L139.9,509.57 L140.4,507.72 L140.9,506.01 L141.4,504.45 L141.9,503.05 L142.4,501.82 L142.9,500.76 L143.4,499.88 L143.9,499.19 L144.4,498.70 L144.9,498.40 L145.4,498.30 L145.9,498.40 L146.4,498.70 L146.9,499.19 L147.4,499.88 L147.9,500.76 L148.4,501.82 L148.9,503.05 L149.4,504.45 L149.9,506.01 L150.4,507.72 L150.9,509.57 L151.4,511.54 L151.9,513.63 L152.4,515.82 L152.9,518.09 L153.4,520.44 L153.9,522.86 L154.4,525.32 L154.9,527.82 L155.4,530.35 L155.9,532.89 L156.4,535.42 L156.9,537.95 L157.4,540.45 L157.9,542.92 L158.4,545.36 L158.9,547.74 L159.4,550.06 L159.9,552.32 L160.4,554.52 L160.9,556.63 L161.4,558.67 L161.9,560.63 L162.4,562.50 L162.9,564.28 L163.4,565.98 L163.9,567.58 L164.4,569.10 L164.9,570.53 L165.4,571.87 L165.9,573.13 L166.4,574.30 L166.9,575.40 L167.4,576.41 L167.9,577.35 L168.4,578.22 L168.9,579.02 L169.4,579.75 L169.9,580.42 L170.4,581.04 L170.9,581.59 L171.4,582.10 L171.9,582.56 L172.4,582.98 L172.9,583.35 L173.4,583.69 L173.9,583.99 L174.4,584.26 L174.9,584.50 L175.4,584.72 L175.9,584.91 L176.4,585.07 L176.9,585.22 L177.4,585.35 L177.9,585.47 L178.4,585.57 L178.9,585.66 L179.4,585.74 L179.9,585.80 L180.4,585.86 L180.9,585.91 L181.4,585.95 L181.9,585.99 L182.4,586.02 L182.9,586.05 L183.4,586.07 L183.9,586.09 L184.4,586.11 L184.9,586.13 L185.4,586.14 L185.9,586.15 L186.4,586.16 L186.9,586.16 L187.4,586.17 L187.9,586.18 L188.4,586.18 L188.9,586.18 L189.4,586.19 L189.9,586.19 L190.4,586.19 L190.9,586.19 L191.4,586.19 L191.9,586.20 L192.4,586.20 L192.9,586.20 L193.4,586.20 L193.9,586.20 L194.4,586.20 L194.9,586.20 L195.4,586.20 L195.9,586.20 L196.4,586.20 L196.9,586.20 L197.4,586.20 L197.9,586.20 L198.4,586.20 L198.9,586.20 L199.4,586.20 L199.9,586.20 L200.4,586.20 L200.9,586.20 L201.4,586.20 L201.9,586.20 L202.4,586.20 L202.9,586.20 L203.4,586.20 L203.9,586.20 L204.4,586.20 L204.9,586.20 L205.4,586.20 L205.9,586.20 L206.4,586.20 L206.9,586.20 L207.4,586.20 L207.9,586.20 L208.4,586.20 L208.9,586.20 L209.4,586.20 L209.9,586.20 L210.4,586.20 L210.9,586.20 L211.4,586.20 L211.9,586.20 L212.4,586.20 L212.9,586.20 L213.4,586.20 L213.9,586.20 L214.4,586.20 L214.9,586.20 L215.4,586.20 L215.9,586.20 L216.4,586.20 L216.9,586.20 L217.4,586.20 L217.9,586.20 L218.4,586.20 L218.9,586.20 L219.4,586.20 L219.9,586.20 L220.4,586.20 L220.9,586.20 L221.4,586.20 L221.9,586.20 L222.4,586.20 L222.9,586.20 L223.4,586.20 L223.9,586.20 L224.4,586.20 L224.9,586.20 L225.4,586.20 L225.9,586.20 L226.4,586.20 L226.9,586.20 L227.4,586.20 L227.9,586.20 L228.4,586.20 L228.9,586.20 L229.4,586.20 L229.9,586.20 L230.4,586.20 L230.9,586.20 L231.4,586.20 L231.9,586.20 L232.4,586.20 L232.9,586.20 L233.4,586.20 L233.9,586.20 L234.4,586.20 L234.9,586.20 L235.4,586.20 L235.9,586.20 L236.4,586.20 L236.9,586.20 L237.4,586.20 L237.9,586.20 L238.4,586.20 L238.9,586.20 L239.4,586.20 L239.9,586.20 L240.4,586.20 L240.9,586.20 L241.4,586.20 L241.9,586.20 L242.4,586.20 L242.9,586.20 L243.4,586.20 L243.9,586.20 L244.4,586.20 L244.9,586.20 L245.4,586.20 L245.9,586.20 L246.4,586.20 L246.9,586.20 L247.4,586.20 L247.9,586.20 L248.4,586.20 L248.9,586.20 L249.4,586.20" stroke="#e0dc40" stroke-width="1.3" fill="none"/><text x="39.4" y="500.6" text-anchor="end" font-size="6.6" fill="#f0f0f0" font-family="Liberation Sans" letter-spacing="-0.2">65535.0</text><text x="39.4" y="515.2" text-anchor="end" font-size="6.6" fill="#f0f0f0" font-family="Liberation Sans" letter-spacing="-0.2">54612.5</text><text x="39.4" y="529.9" text-anchor="end" font-size="6.6" fill="#f0f0f0" font-family="Liberation Sans" letter-spacing="-0.2">43690.0</text><text x="39.4" y="544.5" text-anchor="end" font-size="6.6" fill="#f0f0f0" font-family="Liberation Sans" letter-spacing="-0.2">32767.5</text><text x="39.4" y="559.2" text-anchor="end" font-size="6.6" fill="#f0f0f0" font-family="Liberation Sans" letter-spacing="-0.2">21845.0</text><text x="39.4" y="573.9" text-anchor="end" font-size="6.6" fill="#f0f0f0" font-family="Liberation Sans" letter-spacing="-0.2">10922.5</text><text x="39.4" y="588.5" text-anchor="end" font-size="6.6" fill="#f0f0f0" font-family="Liberation Sans" letter-spacing="-0.2">0.0</text><text x="41.4" y="594.7" text-anchor="middle" font-size="6.6" fill="#f0f0f0" font-family="Liberation Sans" letter-spacing="-0.2">0.0</text><text x="93.4" y="594.7" text-anchor="middle" font-size="6.6" fill="#f0f0f0" font-family="Liberation Sans" letter-spacing="-0.2">400.0</text><text x="145.5" y="594.7" text-anchor="middle" font-size="6.6" fill="#f0f0f0" font-family="Liberation Sans" letter-spacing="-0.2">800.0</text><text x="197.5" y="594.7" text-anchor="middle" font-size="6.6" fill="#f0f0f0" font-family="Liberation Sans" letter-spacing="-0.2">1200.0</text><text x="249.6" y="594.7" text-anchor="middle" font-size="6.6" fill="#f0f0f0" font-family="Liberation Sans" letter-spacing="-0.2">1600.0</text><text x="137.4" y="491.5" text-anchor="middle" font-size="6.8" fill="#f4f4f4" font-family="Liberation Sans">X Axes</text>
</svg>
<div class="a hdr" style="left:270px;top:462px;width:259px;height:13px;line-height:13px;"><span>Y Axes View</span></div>
<svg class="a" style="left:270px;top:475px;" width="259" height="142" viewBox="270 475 259 142">
<rect x="270" y="475" width="259" height="142" fill="#878a90"/>
<path d="M301.6 498.3H509.6M301.6 513.0H509.6M301.6 527.6H509.6M301.6 542.2H509.6M301.6 556.9H509.6M301.6 571.6H509.6M301.6 586.2H509.6M305.6 498.3V589.2M356.6 498.3V589.2M407.6 498.3V589.2M458.6 498.3V589.2M509.6 498.3V589.2" stroke="#b2b4b8" stroke-width="0.8" fill="none"/><path d="M305.6,586.20 L306.1,586.20 L306.6,586.20 L307.1,586.20 L307.6,586.20 L308.1,586.20 L308.6,586.20 L309.1,586.20 L309.6,586.20 L310.1,586.20 L310.6,586.20 L311.1,586.20 L311.6,586.20 L312.1,586.20 L312.6,586.20 L313.1,586.20 L313.6,586.20 L314.1,586.20 L314.6,586.20 L315.1,586.20 L315.6,586.20 L316.1,586.20 L316.6,586.20 L317.1,586.20 L317.6,586.20 L318.1,586.20 L318.6,586.20 L319.1,586.20 L319.6,586.20 L320.1,586.20 L320.6,586.20 L321.1,586.20 L321.6,586.20 L322.1,586.20 L322.6,586.20 L323.1,586.20 L323.6,586.20 L324.1,586.20 L324.6,586.20 L325.1,586.20 L325.6,586.20 L326.1,586.20 L326.6,586.20 L327.1,586.20 L327.6,586.20 L328.1,586.20 L328.6,586.20 L329.1,586.20 L329.6,586.20 L330.1,586.20 L330.6,586.20 L331.1,586.20 L331.6,586.20 L332.1,586.20 L332.6,586.20 L333.1,586.20 L333.6,586.20 L334.1,586.20 L334.6,586.20 L335.1,586.20 L335.6,586.20 L336.1,586.20 L336.6,586.20 L337.1,586.20 L337.6,586.20 L338.1,586.20 L338.6,586.20 L339.1,586.20 L339.6,586.20 L340.1,586.20 L340.6,586.20 L341.1,586.20 L341.6,586.20 L342.1,586.20 L342.6,586.20 L343.1,586.20 L343.6,586.20 L344.1,586.20 L344.6,586.20 L345.1,586.20 L345.6,586.20 L346.1,586.20 L346.6,586.20 L347.1,586.20 L347.6,586.20 L348.1,586.20 L348.6,586.20 L349.1,586.20 L349.6,586.20 L350.1,586.20 L350.6,586.20 L351.1,586.20 L351.6,586.20 L352.1,586.20 L352.6,586.20 L353.1,586.20 L353.6,586.19 L354.1,586.19 L354.6,586.19 L355.1,586.19 L355.6,586.19 L356.1,586.19 L356.6,586.18 L357.1,586.18 L357.6,586.18 L358.1,586.17 L358.6,586.17 L359.1,586.16 L359.6,586.16 L360.1,586.15 L360.6,586.14 L361.1,586.13 L361.6,586.12 L362.1,586.11 L362.6,586.09 L363.1,586.08 L363.6,586.06 L364.1,586.03 L364.6,586.01 L365.1,585.98 L365.6,585.94 L366.1,585.91 L366.6,585.86 L367.1,585.81 L367.6,585.76 L368.1,585.70 L368.6,585.63 L369.1,585.55 L369.6,585.46 L370.1,585.36 L370.6,585.25 L371.1,585.12 L371.6,584.98 L372.1,584.83 L372.6,584.66 L373.1,584.47 L373.6,584.26 L374.1,584.03 L374.6,583.78 L375.1,583.50 L375.6,583.19 L376.1,582.86 L376.6,582.49 L377.1,582.09 L377.6,581.66 L378.1,581.19 L378.6,580.68 L379.1,580.12 L379.6,579.52 L380.1,578.88 L380.6,578.18 L381.1,577.44 L381.6,576.64 L382.1,575.79 L382.6,574.88 L383.1,573.91 L383.6,572.88 L384.1,571.79 L384.6,570.63 L385.1,569.41 L385.6,568.13 L386.1,566.78 L386.6,565.36 L387.1,563.88 L387.6,562.33 L388.1,560.72 L388.6,559.05 L389.1,557.31 L389.6,555.52 L390.1,553.66 L390.6,551.76 L391.1,549.80 L391.6,547.80 L392.1,545.75 L392.6,543.67 L393.1,541.55 L393.6,539.41 L394.1,537.25 L394.6,535.07 L395.1,532.89 L395.6,530.70 L396.1,528.53 L396.6,526.36 L397.1,524.23 L397.6,522.12 L398.1,520.05 L398.6,518.03 L399.1,516.07 L399.6,514.17 L400.1,512.35 L400.6,510.60 L401.1,508.95 L401.6,507.39 L402.1,505.93 L402.6,504.59 L403.1,503.36 L403.6,502.25 L404.1,501.27 L404.6,500.43 L405.1,499.72 L405.6,499.15 L406.1,498.72 L406.6,498.44 L407.1,498.31 L407.6,498.33 L408.1,498.49 L408.6,498.80 L409.1,499.25 L409.6,499.85 L410.1,500.58 L410.6,501.46 L411.1,502.46 L411.6,503.59 L412.1,504.85 L412.6,506.22 L413.1,507.69 L413.6,509.27 L414.1,510.95 L414.6,512.71 L415.1,514.55 L415.6,516.46 L416.1,518.43 L416.6,520.46 L417.1,522.54 L417.6,524.65 L418.1,526.80 L418.6,528.96 L419.1,531.14 L419.6,533.32 L420.1,535.51 L420.6,537.68 L421.1,539.84 L421.6,541.98 L422.1,544.09 L422.6,546.16 L423.1,548.20 L423.6,550.19 L424.1,552.14 L424.6,554.04 L425.1,555.88 L425.6,557.66 L426.1,559.39 L426.6,561.05 L427.1,562.65 L427.6,564.18 L428.1,565.65 L428.6,567.05 L429.1,568.39 L429.6,569.66 L430.1,570.87 L430.6,572.01 L431.1,573.09 L431.6,574.11 L432.1,575.07 L432.6,575.96 L433.1,576.81 L433.6,577.59 L434.1,578.33 L434.6,579.01 L435.1,579.65 L435.6,580.24 L436.1,580.78 L436.6,581.29 L437.1,581.75 L437.6,582.18 L438.1,582.57 L438.6,582.93 L439.1,583.26 L439.6,583.56 L440.1,583.83 L440.6,584.08 L441.1,584.31 L441.6,584.51 L442.1,584.70 L442.6,584.86 L443.1,585.01 L443.6,585.15 L444.1,585.27 L444.6,585.38 L445.1,585.48 L445.6,585.56 L446.1,585.64 L446.6,585.71 L447.1,585.77 L447.6,585.82 L448.1,585.87 L448.6,585.91 L449.1,585.95 L449.6,585.98 L450.1,586.01 L450.6,586.04 L451.1,586.06 L451.6,586.08 L452.1,586.10 L452.6,586.11 L453.1,586.12 L453.6,586.13 L454.1,586.14 L454.6,586.15 L455.1,586.16 L455.6,586.17 L456.1,586.17 L456.6,586.17 L457.1,586.18 L457.6,586.18 L458.1,586.18 L458.6,586.19 L459.1,586.19 L459.6,586.19 L460.1,586.19 L460.6,586.19 L461.1,586.19 L461.6,586.20 L462.1,586.20 L462.6,586.20 L463.1,586.20 L463.6,586.20 L464.1,586.20 L464.6,586.20 L465.1,586.20 L465.6,586.20 L466.1,586.20 L466.6,586.20 L467.1,586.20 L467.6,586.20 L468.1,586.20 L468.6,586.20 L469.1,586.20 L469.6,586.20 L470.1,586.20 L470.6,586.20 L471.1,586.20 L471.6,586.20 L472.1,586.20 L472.6,586.20 L473.1,586.20 L473.6,586.20 L474.1,586.20 L474.6,586.20 L475.1,586.20 L475.6,586.20 L476.1,586.20 L476.6,586.20 L477.1,586.20 L477.6,586.20 L478.1,586.20 L478.6,586.20 L479.1,586.20 L479.6,586.20 L480.1,586.20 L480.6,586.20 L481.1,586.20 L481.6,586.20 L482.1,586.20 L482.6,586.20 L483.1,586.20 L483.6,586.20 L484.1,586.20 L484.6,586.20 L485.1,586.20 L485.6,586.20 L486.1,586.20 L486.6,586.20 L487.1,586.20 L487.6,586.20 L488.1,586.20 L488.6,586.20 L489.1,586.20 L489.6,586.20 L490.1,586.20 L490.6,586.20 L491.1,586.20 L491.6,586.20 L492.1,586.20 L492.6,586.20 L493.1,586.20 L493.6,586.20 L494.1,586.20 L494.6,586.20 L495.1,586.20 L495.6,586.20 L496.1,586.20 L496.6,586.20 L497.1,586.20 L497.6,586.20 L498.1,586.20 L498.6,586.20 L499.1,586.20 L499.6,586.20 L500.1,586.20 L500.6,586.20 L501.1,586.20 L501.6,586.20 L502.1,586.20 L502.6,586.20 L503.1,586.20 L503.6,586.20 L504.1,586.20 L504.6,586.20 L505.1,586.20 L505.6,586.20 L506.1,586.20 L506.6,586.20 L507.1,586.20 L507.6,586.20 L508.1,586.20 L508.6,586.20 L509.1,586.20 L509.6,586.20" stroke="#e0dc40" stroke-width="1.3" fill="none"/><text x="303.6" y="500.6" text-anchor="end" font-size="6.6" fill="#f0f0f0" font-family="Liberation Sans" letter-spacing="-0.2">65535.0</text><text x="303.6" y="515.2" text-anchor="end" font-size="6.6" fill="#f0f0f0" font-family="Liberation Sans" letter-spacing="-0.2">54612.5</text><text x="303.6" y="529.9" text-anchor="end" font-size="6.6" fill="#f0f0f0" font-family="Liberation Sans" letter-spacing="-0.2">43690.0</text><text x="303.6" y="544.5" text-anchor="end" font-size="6.6" fill="#f0f0f0" font-family="Liberation Sans" letter-spacing="-0.2">32767.5</text><text x="303.6" y="559.2" text-anchor="end" font-size="6.6" fill="#f0f0f0" font-family="Liberation Sans" letter-spacing="-0.2">21845.0</text><text x="303.6" y="573.9" text-anchor="end" font-size="6.6" fill="#f0f0f0" font-family="Liberation Sans" letter-spacing="-0.2">10922.5</text><text x="303.6" y="588.5" text-anchor="end" font-size="6.6" fill="#f0f0f0" font-family="Liberation Sans" letter-spacing="-0.2">0.0</text><text x="305.6" y="594.7" text-anchor="middle" font-size="6.6" fill="#f0f0f0" font-family="Liberation Sans" letter-spacing="-0.2">0.0</text><text x="356.6" y="594.7" text-anchor="middle" font-size="6.6" fill="#f0f0f0" font-family="Liberation Sans" letter-spacing="-0.2">300.0</text><text x="407.6" y="594.7" text-anchor="middle" font-size="6.6" fill="#f0f0f0" font-family="Liberation Sans" letter-spacing="-0.2">600.0</text><text x="458.6" y="594.7" text-anchor="middle" font-size="6.6" fill="#f0f0f0" font-family="Liberation Sans" letter-spacing="-0.2">900.0</text><text x="509.6" y="594.7" text-anchor="middle" font-size="6.6" fill="#f0f0f0" font-family="Liberation Sans" letter-spacing="-0.2">1200.0</text><text x="399.9" y="491.5" text-anchor="middle" font-size="6.8" fill="#f4f4f4" font-family="Liberation Sans">Y Axes</text>
</svg>

<svg class="a" style="left:249px;top:141.3px;" width="5" height="5" viewBox="0 0 5 5"><path d="M1.2 0.6h3.2v3.2M0.6 1.4h3v3h-3z" fill="none" stroke="#333" stroke-width="0.8" transform="skewX(-8)"/></svg><svg class="a" style="left:259px;top:141.8px;" width="4.5" height="4" viewBox="0 0 4.5 4"><path d="M0.3 0.3L4.2 3.7M4.2 0.3L0.3 3.7" stroke="#222" stroke-width="1"/></svg><svg class="a" style="left:511px;top:141.3px;" width="5" height="5" viewBox="0 0 5 5"><path d="M1.2 0.6h3.2v3.2M0.6 1.4h3v3h-3z" fill="none" stroke="#333" stroke-width="0.8" transform="skewX(-8)"/></svg><svg class="a" style="left:521px;top:141.8px;" width="4.5" height="4" viewBox="0 0 4.5 4"><path d="M0.3 0.3L4.2 3.7M4.2 0.3L0.3 3.7" stroke="#222" stroke-width="1"/></svg><svg class="a" style="left:251px;top:466.7px;" width="5" height="5" viewBox="0 0 5 5"><path d="M1.2 0.6h3.2v3.2M0.6 1.4h3v3h-3z" fill="none" stroke="#333" stroke-width="0.8" transform="skewX(-8)"/></svg><svg class="a" style="left:261px;top:467.2px;" width="4.5" height="4" viewBox="0 0 4.5 4"><path d="M0.3 0.3L4.2 3.7M4.2 0.3L0.3 3.7" stroke="#222" stroke-width="1"/></svg><svg class="a" style="left:512px;top:466.7px;" width="5" height="5" viewBox="0 0 5 5"><path d="M1.2 0.6h3.2v3.2M0.6 1.4h3v3h-3z" fill="none" stroke="#333" stroke-width="0.8" transform="skewX(-8)"/></svg><svg class="a" style="left:522px;top:467.2px;" width="4.5" height="4" viewBox="0 0 4.5 4"><path d="M0.3 0.3L4.2 3.7M4.2 0.3L0.3 3.7" stroke="#222" stroke-width="1"/></svg>
<!-- colorbar -->
<div class="a" style="left:529px;top:138px;width:12px;height:479px;background:linear-gradient(#fff 0px,#ff0000 47px,#ff8c00 88px,#ffff00 143px,#00ff00 192px,#00a0a0 254px,#0070ff 320px,#0000ff 379px,#8000ff 427px,#000 479px);"></div>

<!-- right panel -->
<div class="a" style="left:541px;top:162px;width:262px;height:455px;border:1px solid #4a90e2;box-sizing:border-box;background:#dfe2e8;"></div><div class="a" style="left:797px;top:163px;width:5px;height:449px;background:#e4e6ea;"></div>

<!-- right panel content -->
<div class="a" style="left:564.6px;top:143px;width:52.2px;height:19.0px;background:linear-gradient(#2c84e4,#18a4f4);border-radius:1px 1px 0 0;"></div>
<svg class="a" style="left:569px;top:148px;" width="5" height="9" viewBox="0 0 5 9"><rect width="5" height="9" fill="#e8d8c0"/><path d="M0 2.2H5M0 4.5H5M0 6.8H5M2.5 0V9" stroke="#a89070" stroke-width="0.6"/></svg>
<div class="a t" style="left:581.5px;top:147.5px;font-size:6.2px;color:#10204a;font-weight:bold;">数据</div>
<div class="a t" style="left:598px;top:147.5px;font-size:6.2px;color:#10204a;font-weight:bold;letter-spacing:0.4px;transform:scaleX(0.78);transform-origin:0 0;">DATA</div>
<div class="a" style="left:620.9px;top:143px;width:52.1px;height:19.0px;background:linear-gradient(#fafafa,#e6e6e6);border-radius:1px 1px 0 0;"></div>
<svg class="a" style="left:626px;top:148px;" width="8" height="9" viewBox="0 0 8 9"><path d="M1 8L5 4M4 2a2 2 0 1 0 3 2" stroke="#9a9a9a" stroke-width="1" fill="none"/></svg>
<div class="a t" style="left:639px;top:147.5px;font-size:6.2px;color:#222;font-weight:bold;">设置</div>
<div class="a t" style="left:655px;top:147.5px;font-size:6.2px;color:#222;font-weight:bold;letter-spacing:0.4px;transform:scaleX(0.8);transform-origin:0 0;">SET</div>
<div class="a" style="left:547.2px;top:178px;width:247.4px;height:108.0px;border:1px solid #98a48e;box-sizing:border-box;"></div><div class="a" style="left:549px;top:176px;width:17.0px;height:4.0px;background:#dfe2e8;"></div><div class="a" style="left:570px;top:176px;width:32.0px;height:4.0px;background:#dfe2e8;"></div><div class="a" style="left:736px;top:176px;width:11.0px;height:4.0px;background:#dfe2e8;"></div><svg class="a" style="left:739.5px;top:176.2px;" width="5" height="4" viewBox="0 0 5 4"><path d="M0 0H5L2.5 3.5Z" fill="#142a5a"/></svg><div class="a t" style="left:572.5px;top:173.8px;font-size:6.5px;color:#111;font-weight:600;">参数控制</div>
<div class="a" style="left:547.2px;top:299px;width:247.4px;height:183.4px;border:1px solid #98a48e;box-sizing:border-box;"></div><div class="a" style="left:549px;top:297px;width:17.0px;height:4.0px;background:#dfe2e8;"></div><div class="a" style="left:570px;top:297px;width:32.0px;height:4.0px;background:#dfe2e8;"></div><div class="a" style="left:736px;top:297px;width:11.0px;height:4.0px;background:#dfe2e8;"></div><svg class="a" style="left:739.5px;top:297.2px;" width="5" height="4" viewBox="0 0 5 4"><path d="M0 0H5L2.5 3.5Z" fill="#142a5a"/></svg><div class="a t" style="left:572.5px;top:294.8px;font-size:6.5px;color:#111;font-weight:600;">光束数据</div>
<div class="a" style="left:547.2px;top:495.4px;width:247.4px;height:69.6px;border:1px solid #98a48e;box-sizing:border-box;"></div><div class="a" style="left:549px;top:493.4px;width:17.0px;height:4.0px;background:#dfe2e8;"></div><div class="a" style="left:570px;top:493.4px;width:39.0px;height:4.0px;background:#dfe2e8;"></div><div class="a" style="left:736px;top:493.4px;width:11.0px;height:4.0px;background:#dfe2e8;"></div><svg class="a" style="left:739.5px;top:493.59999999999997px;" width="5" height="4" viewBox="0 0 5 4"><path d="M0 0H5L2.5 3.5Z" fill="#142a5a"/></svg><div class="a t" style="left:572.5px;top:491.2px;font-size:6.5px;color:#111;font-weight:600;">椭圆度测量</div>
<div class="a" style="left:547.2px;top:578.7px;width:247.4px;height:33.3px;border:1px solid #98a48e;box-sizing:border-box;border-bottom:none;"></div><div class="a" style="left:549px;top:576.7px;width:17.0px;height:4.0px;background:#dfe2e8;"></div><div class="a" style="left:570px;top:576.7px;width:19.0px;height:4.0px;background:#dfe2e8;"></div><div class="a" style="left:736px;top:576.7px;width:11.0px;height:4.0px;background:#dfe2e8;"></div><svg class="a" style="left:739.5px;top:576.9000000000001px;" width="5" height="4" viewBox="0 0 5 4"><path d="M0 0H5L2.5 3.5Z" fill="#142a5a"/></svg><div class="a t" style="left:572.5px;top:574.5px;font-size:6.5px;color:#111;font-weight:600;">孔径</div>
<svg class="a" style="left:550px;top:170px;" width="18" height="16" viewBox="550 170 18 16"><path d="M552 173.7H564M552 178.4H564M552 182.8H561" stroke="#1a1a1a" stroke-width="1.3"/><circle cx="558" cy="173.7" r="1.7" fill="#1a7af0"/><circle cx="555.1" cy="178.4" r="1.7" fill="#1a7af0"/><circle cx="564" cy="182" r="2" fill="none" stroke="#aaa" stroke-width="0.8"/></svg>
<svg class="a" style="left:550px;top:292px;" width="16" height="15" viewBox="550 292 16 15"><rect x="552" y="293.8" width="11.5" height="9.5" rx="1.2" fill="#f4f4f4" stroke="#444" stroke-width="1"/><path d="M553.5 295.5v6l5-3z" fill="#2a8af0"/><path d="M557 301.5l4.5-5" stroke="#2a6ad8" stroke-width="1.2"/><circle cx="559.5" cy="295.8" r="1" fill="#e04040"/><path d="M553 300h9.5v2.5h-9.5z" fill="#4aa0f0" opacity="0.6"/><path d="M552 304.8H563.5L565 306" stroke="#444" stroke-width="1" fill="none"/></svg>
<svg class="a" style="left:551px;top:488px;" width="15" height="16" viewBox="551 488 15 16"><ellipse cx="558.7" cy="496" rx="6.5" ry="7" fill="#111"/><ellipse cx="558.7" cy="496" rx="5.2" ry="5.6" fill="#9a20e8"/><ellipse cx="558.7" cy="496" rx="4.2" ry="4.2" fill="#20a0f0"/><ellipse cx="558.7" cy="496" rx="3.3" ry="3" fill="#30e040"/><ellipse cx="558.7" cy="496" rx="2.5" ry="2" fill="#f0e020"/><ellipse cx="558.7" cy="496" rx="1.6" ry="1.1" fill="#f02020"/></svg>
<svg class="a" style="left:551px;top:571px;" width="15" height="16" viewBox="551 571 15 16"><circle cx="558.7" cy="578.7" r="6.8" fill="#111"/><circle cx="558.7" cy="578.7" r="5.6" fill="#9a20e8"/><circle cx="558.7" cy="578.7" r="4.4" fill="#20c8d8"/><circle cx="558.7" cy="578.7" r="3.4" fill="#d8f4f4"/><circle cx="558.7" cy="578.7" r="2.7" fill="#111"/></svg>
<div class="a t" style="left:562px;top:193.7px;font-size:5.9px;color:#151515;">单位:</div>
<div class="a" style="left:585.2px;top:192.2px;width:47.8px;height:11.9px;background:#fff;"></div>
<div class="a t" style="left:587px;top:193.7px;font-size:5.9px;color:#333;">μm</div>
<svg class="a" style="left:625px;top:196.5px;" width="5" height="4" viewBox="0 0 5 4"><path d="M0.5 0.5L2.5 2.8L4.5 0.5" stroke="#222" stroke-width="0.9" fill="none"/></svg>
<div class="a t" style="left:657px;top:191.3px;font-size:8.0px;color:#222;">光束质心(x, y, r)</div>
<svg class="a" style="left:762px;top:190px;" width="24" height="24" viewBox="762 190 24 24"><ellipse cx="774" cy="201.7" rx="10" ry="9.8" fill="#f2f3f6"/><g stroke="#4a5a98" stroke-width="0.7" fill="none"><path d="M767 196.5Q774 190 781 196.5M769 194.5Q774 191.5 779 194.5M767 207Q774 213.5 781 207M769 209Q774 212 779 209M774 192V196M774 207V211.5"/></g><text x="764" y="205.1" font-size="10" font-weight="bold" fill="#102070" stroke="#102070" stroke-width="0.55" font-family="Liberation Serif" textLength="19.8" lengthAdjust="spacingAndGlyphs">ISO</text></svg>
<div class="a t" style="left:562px;top:210px;font-size:5.9px;color:#151515;">格式:</div>
<div class="a" style="left:585.5px;top:209px;width:47.5px;height:11.5px;background:#fff;"></div>
<div class="a t" style="left:588px;top:210px;font-size:5.9px;color:#333;">ddd. 3f</div>
<svg class="a" style="left:626px;top:210px;" width="5" height="10" viewBox="0 0 5 10"><path d="M0.5 3.5L2.5 1L4.5 3.5M0.5 6.5L2.5 9L4.5 6.5" stroke="#222" stroke-width="0.9" fill="none"/></svg>
<div class="a t" style="left:561px;top:223.6px;font-size:5.9px;color:#151515;">光束异常报警</div>
<div class="a" style="left:598.2px;top:224.5px;width:7.0px;height:6.7px;border:0.8px solid #555;box-sizing:border-box;background:#f4f4f4;border-radius:0.8px;"></div>
<div class="a t" style="left:614px;top:223.6px;font-size:5.9px;color:#151515;">故障动作:</div>
<div class="a" style="left:647.3px;top:222px;width:71.5px;height:12.0px;background:#fff;"></div>
<div class="a t" style="left:649px;top:223px;font-size:5.9px;color:#333;">报警</div>
<svg class="a" style="left:713px;top:226.5px;" width="5" height="4" viewBox="0 0 5 4"><path d="M0.5 0.5L2.5 2.8L4.5 0.5" stroke="#222" stroke-width="0.9" fill="none"/></svg>
<div class="a t" style="left:580.8px;top:245.7px;font-size:5.9px;color:#151515;">中心点</div>
<div class="a" style="left:600.3px;top:245.2px;width:38.2px;height:10.6px;background:#fff;"></div>
<div class="a t" style="left:602px;top:245.5px;font-size:5.9px;color:#333;">0.00</div>
<svg class="a" style="left:632px;top:245.5px;" width="5" height="10" viewBox="0 0 5 10"><path d="M0.5 3.5L2.5 1L4.5 3.5M0.5 6.5L2.5 9L4.5 6.5" stroke="#222" stroke-width="0.9" fill="none"/></svg>
<div class="a" style="left:647.7px;top:245.2px;width:37.3px;height:10.6px;background:#fff;"></div>
<div class="a t" style="left:650px;top:245.5px;font-size:5.9px;color:#333;">0.00</div>
<svg class="a" style="left:679px;top:245.5px;" width="5" height="10" viewBox="0 0 5 10"><path d="M0.5 3.5L2.5 1L4.5 3.5M0.5 6.5L2.5 9L4.5 6.5" stroke="#222" stroke-width="0.9" fill="none"/></svg>
<div class="a t" style="left:580.8px;top:262.7px;font-size:5.9px;color:#151515;">中心半径</div>
<div class="a" style="left:624px;top:262px;width:37.3px;height:10.6px;background:#fff;"></div>
<div class="a t" style="left:627px;top:262.3px;font-size:5.9px;color:#333;">0.00</div>
<svg class="a" style="left:655px;top:262.3px;" width="5" height="10" viewBox="0 0 5 10"><path d="M0.5 3.5L2.5 1L4.5 3.5M0.5 6.5L2.5 9L4.5 6.5" stroke="#222" stroke-width="0.9" fill="none"/></svg>
<div class="a" style="left:752px;top:268.4px;width:33.3px;height:12.0px;background:#5c8c8e;border:1px solid #4a7072;box-sizing:border-box;border-radius:1px;"></div>
<div class="a t" style="left:763px;top:269.4px;font-size:5.8px;color:#1a2a2a;">确定</div>
<div class="a" style="left:556.9px;top:308.6px;width:233.5px;height:13.8px;background:#6a8692;"></div>
<div class="a t" style="left:558.3px;top:311.9px;font-size:6.8px;color:#111;">光束质心(x,y,r)</div>
<div class="a t" style="left:619.6px;top:311.9px;font-size:6.8px;color:#111;">3600.0,2700.0,4500.0</div>
<div class="a t" style="left:762.7px;top:311.9px;font-size:6.8px;color:#111;">μm</div>
<div class="a t" style="left:558.3px;top:326.09999999999997px;font-size:6.8px;color:#333;">光束峰值(x,y,r)</div>
<div class="a t" style="left:762.7px;top:326.09999999999997px;font-size:6.8px;color:#333;">μm</div>
<div class="a t" style="left:558.3px;top:340.29999999999995px;font-size:6.8px;color:#333;">峰值像素饱和度</div>
<div class="a t" style="left:762.7px;top:340.29999999999995px;font-size:6.8px;color:#333;">%</div>
<div class="a t" style="left:558.3px;top:354.5px;font-size:6.8px;color:#333;">总能量</div>
<div class="a t" style="left:762.7px;top:354.5px;font-size:6.8px;color:#333;">digits</div>
<div class="a t" style="left:558.3px;top:368.7px;font-size:6.8px;color:#333;">D4σ宽度</div>
<div class="a t" style="left:762.7px;top:368.7px;font-size:6.8px;color:#333;">μm</div>
<div class="a t" style="left:558.3px;top:382.9px;font-size:6.8px;color:#333;">D4σ直径</div>
<div class="a t" style="left:762.7px;top:382.9px;font-size:6.8px;color:#333;">μm</div>
<div class="a t" style="left:558.3px;top:397.09999999999997px;font-size:6.8px;color:#333;">光束直径</div>
<div class="a t" style="left:762.7px;top:397.09999999999997px;font-size:6.8px;color:#333;">μm</div>
<div class="a t" style="left:558.3px;top:411.29999999999995px;font-size:6.8px;color:#333;">有效面积</div>
<div class="a t" style="left:762.7px;top:411.29999999999995px;font-size:6.8px;color:#333;">μm²</div>
<div class="a t" style="left:558.3px;top:425.5px;font-size:6.8px;color:#333;">刀锋法光束宽度</div>
<div class="a t" style="left:619.6px;top:425.5px;font-size:6.8px;color:#333;">1350.0,1350.0</div>
<div class="a t" style="left:762.7px;top:425.5px;font-size:6.8px;color:#333;">μm</div>
<div class="a t" style="left:558.3px;top:439.7px;font-size:6.8px;color:#333;">狭缝法光束直径</div>
<div class="a t" style="left:619.6px;top:439.7px;font-size:6.8px;color:#333;">1350.0,1350.0</div>
<div class="a t" style="left:762.7px;top:439.7px;font-size:6.8px;color:#333;">μm</div>
<div class="a t" style="left:558.3px;top:453.9px;font-size:6.8px;color:#333;">峰均比</div>
<div class="a t" style="left:619.6px;top:453.9px;font-size:6.8px;color:#333;">2.316</div>
<div class="a t" style="left:762.7px;top:453.9px;font-size:6.8px;color:#333;">:</div>
<div class="a t" style="left:558.3px;top:468.09999999999997px;font-size:6.8px;color:#333;">峰值功率/能量</div>
<div class="a t" style="left:619.6px;top:468.09999999999997px;font-size:6.8px;color:#333;">139738.248</div>
<div class="a t" style="left:762.7px;top:468.09999999999997px;font-size:6.8px;color:#333;">μw/cm²</div>
<div class="a t" style="left:558.3px;top:508.5px;font-size:6.8px;color:#333;">椭圆长轴</div>
<div class="a t" style="left:619.6px;top:508.5px;font-size:6.8px;color:#333;">1346.999</div>
<div class="a t" style="left:762.7px;top:508.5px;font-size:6.8px;color:#333;">μm</div>
<div class="a t" style="left:558.3px;top:522.75px;font-size:6.8px;color:#333;">椭圆短轴</div>
<div class="a t" style="left:619.6px;top:522.75px;font-size:6.8px;color:#333;">1346.999</div>
<div class="a t" style="left:762.7px;top:522.75px;font-size:6.8px;color:#333;">μm</div>
<div class="a t" style="left:558.3px;top:537.0px;font-size:6.8px;color:#333;">椭圆率</div>
<div class="a t" style="left:619.6px;top:537.0px;font-size:6.8px;color:#333;">1.0</div>
<div class="a t" style="left:762.7px;top:537.0px;font-size:6.8px;color:#333;">:</div>
<div class="a t" style="left:558.3px;top:551.25px;font-size:6.8px;color:#333;">椭圆倾斜角度</div>
<div class="a t" style="left:619.6px;top:551.25px;font-size:6.8px;color:#333;">90.0</div>
<div class="a t" style="left:762.7px;top:551.25px;font-size:6.8px;color:#333;">°</div>
<div class="a" style="left:541px;top:585px;width:261px;height:27px;overflow:hidden;"><div class="a t" style="left:17.299999999999955px;top:6.100000000000023px;font-size:6.8px;color:#333;">孔径直径</div><div class="a t" style="left:78.60000000000002px;top:6.100000000000023px;font-size:6.8px;color:#333;">1800.0</div><div class="a t" style="left:221.70000000000005px;top:6.100000000000023px;font-size:6.8px;color:#333;">μm</div><div class="a t" style="left:17.299999999999955px;top:20.100000000000023px;font-size:6.8px;color:#333;">min,mean,max</div><div class="a t" style="left:78.60000000000002px;top:20.100000000000023px;font-size:6.8px;color:#333;">53.0,14254.765,65535.0</div><div class="a t" style="left:221.70000000000005px;top:20.100000000000023px;font-size:6.8px;color:#333;">pixel</div></div>
<div class="a" style="left:542px;top:612px;width:259.0px;height:4.0px;background:#dfe2e8;"></div>
<!-- status bar -->
<div class="a" style="left:7px;top:617px;width:795px;height:9px;background:#dfe3ea;"></div>

<div class="a t" style="left:10.5px;top:616.5px;font-size:5.8px;line-height:10px;color:#222;">广州基层光学</div>
<svg class="a" style="left:794px;top:619px;" width="7" height="7" viewBox="0 0 7 7"><path d="M6 1L1 6M6 3.5L3.5 6M6 5.5L5.5 6" stroke="#999" stroke-width="0.7"/></svg>
<!-- tooltip -->
<div class="a" style="left:603.7px;top:326.6px;width:142.6px;height:95.3px;background:#fff;border:1px solid #cfcfcf;box-sizing:border-box;border-radius:3px;box-shadow:0 1px 2px rgba(0,0,0,0.12);"></div>
<svg class="a" style="left:611px;top:318px;" width="14" height="10" viewBox="611 318 14 10"><path d="M612 327.8L621.5 319.2L622.5 327.8Z" fill="#fff"/><path d="M612 327.2L621.5 319.2L621.8 327" fill="none" stroke="#cfcfcf" stroke-width="0.8"/></svg>
<div class="a" style="left:740.3px;top:332px;width:3.5px;height:34px;background:#b4b4b4;border-radius:2px;"></div>
<div class="a t" style="left:608px;top:335.3px;font-size:8.6px;font-weight:bold;color:#111;line-height:11px;">光束质心位置</div>
<div class="a" style="left:608px;top:351px;width:130px;font-size:5.7px;line-height:7.4px;color:#222;white-space:nowrap;letter-spacing:-0.2px;">
光束质心位置是指激光光束中心的位置，通常使用<br>二阶矩计算。<br><div style="height:6.1px"></div>它可以提供以下信息:<br><div style="height:6.1px"></div>光束定位：光束质心位置可以帮助确定激光光束的<br>位置。通过光束质心位置的变化，可以确定激光光<br>束的移位和偏移量，从而帮助调整和校准激光器的<br>位置。
</div>
<!-- annotation lines -->
<svg class="a" style="left:0;top:0;" width="828" height="727" viewBox="0 0 828 727">
<g stroke="#f7a01e" stroke-width="1.4" fill="none">
<path d="M197.3 40.5V108"/>
<path d="M404.5 40.5V197"/>
<path d="M691.6 40.5V207"/>
<path d="M54 625V686H82"/>
<path d="M596.8 458V674"/>
<path d="M721.4 414V674"/>
</g>
<g fill="#f5a030" fill-opacity="0.5">
<circle cx="196.8" cy="109" r="6.3"/>
<circle cx="403.4" cy="199.3" r="6.5"/>
<circle cx="691.7" cy="208.4" r="6.5"/>
<circle cx="53.7" cy="624.6" r="6.5"/>
<circle cx="597.4" cy="457.6" r="6.5"/>
<circle cx="721.6" cy="413.8" r="6.5"/>
</g>
<g fill="#f7a01e">
<circle cx="196.8" cy="109" r="2.8"/>
<circle cx="403.4" cy="199.3" r="3"/>
<circle cx="691.7" cy="208.4" r="3"/>
<circle cx="53.7" cy="624.6" r="3"/>
<circle cx="597.4" cy="457.6" r="3"/>
<circle cx="721.6" cy="413.8" r="3"/>
</g>
</svg>
<!-- annotations -->
<div class="a lbl" style="left:152.7px;top:11px;width:88.7px;padding-right:5px;">功能区</div>
<div class="a lbl" style="left:355.4px;top:11px;width:88.6px;padding-left:3px;">主窗口</div>
<div class="a lbl" style="left:636.2px;top:11px;width:100.4px;">参数控制</div>
<div class="a lbl" style="left:82px;top:671.2px;width:116px;line-height:32.5px;">详细信息栏</div>
<div class="a lbl" style="left:545px;top:674px;width:95px;line-height:31.5px;">光源数据</div>
<div class="a lbl" style="left:668.2px;top:674px;width:95.2px;line-height:31.5px;padding-left:1px;">辅助文档</div>

</body></html>
